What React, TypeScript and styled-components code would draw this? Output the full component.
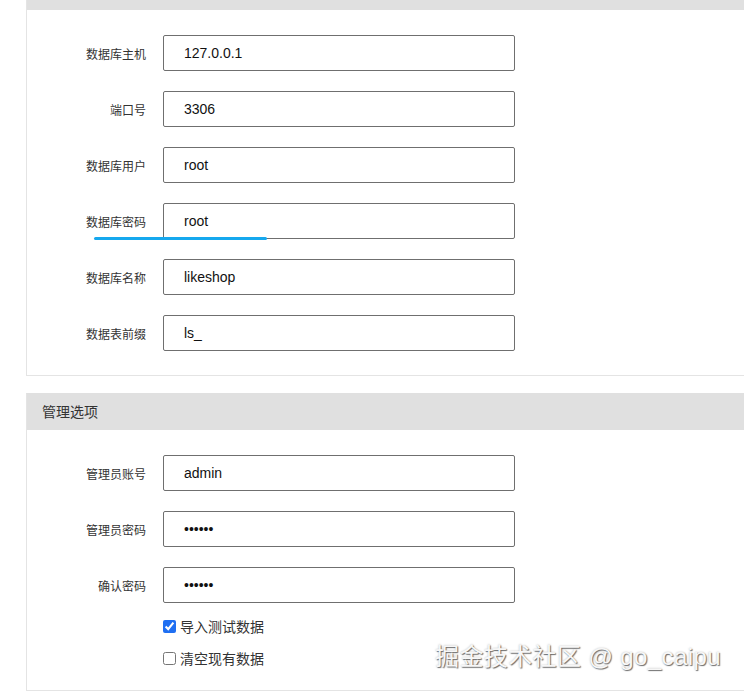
import React from "react";
import styled, { createGlobalStyle } from "styled-components";

const GlobalStyle = createGlobalStyle`
  html, body {
    margin: 0;
    padding: 0;
    background: #ffffff;
    overflow: hidden;
  }
  body {
    font-family: "Liberation Sans", "Noto Sans CJK SC", Arial, sans-serif;
    color: #333333;
  }
`;

const Page = styled.div`
  position: relative;
  width: 744px;
  height: 693px;
  overflow: hidden;
  padding-left: 26px;
  box-sizing: border-box;
`;

const Panel = styled.section<{ $offset?: number }>`
  width: 760px;
  background: #ffffff;
  border: 1px solid #e4e4e4;
  border-top-color: #e0e0e0;
  margin-top: ${(p) => (p.$offset !== undefined ? `${p.$offset}px` : "17px")};
`;

const PanelHeader = styled.div`
  height: 36px;
  line-height: 36px;
  padding: 0 15px;
  background: #e0e0e0;
  font-size: 14px;
  color: #333333;
`;

const PanelBody = styled.div<{ $bottom: number }>`
  display: flex;
  flex-direction: column;
  gap: 20px;
  padding: 25px 0 ${(p) => p.$bottom}px;
`;

const Row = styled.label`
  display: grid;
  grid-template-columns: 119px 352px;
  column-gap: 17px;
  align-items: center;
`;

const FieldLabel = styled.span`
  text-align: right;
  font-size: 12px;
  color: #333333;
`;

const TextInput = styled.input`
  box-sizing: border-box;
  width: 352px;
  height: 36px;
  margin: 0;
  padding: 0 20px;
  border: 1px solid #6f6f6f;
  border-radius: 2px;
  background: #ffffff;
  font-family: "Liberation Sans", "Noto Sans CJK SC", Arial, sans-serif;
  font-size: 14px;
  color: #111111;
  outline: none;
`;

const Options = styled.div`
  display: flex;
  flex-direction: column;
  padding-left: 136px;
  margin-top: -13px;
`;

const Option = styled.label`
  display: flex;
  align-items: center;
  height: 32px;
  font-size: 14px;
  color: #333333;
`;

const Check = styled.input`
  width: 13px;
  height: 13px;
  margin: 0 4px 0 0;
  accent-color: #1f6ff2;
`;

const Underline = styled.div`
  position: absolute;
  left: 94px;
  top: 237px;
  width: 173px;
  height: 3px;
  border-radius: 2px;
  background: #16a8ee;
`;

const Watermark = styled.div`
  position: absolute;
  left: 435px;
  top: 642px;
  font-size: 24px;
  line-height: 30px;
  letter-spacing: 0.4px;
  white-space: nowrap;
  color: #f7f7f7;
  text-shadow: 1px 1px 1px rgba(0, 0, 0, 0.55), 0 0 2px rgba(0, 0, 0, 0.25);
`;

type Field = { label: string; value: string; type?: string };

const dbFields: Field[] = [
  { label: "数据库主机", value: "127.0.0.1" },
  { label: "端口号", value: "3306" },
  { label: "数据库用户", value: "root" },
  { label: "数据库密码", value: "root" },
  { label: "数据库名称", value: "likeshop" },
  { label: "数据表前缀", value: "ls_" },
];

const adminFields: Field[] = [
  { label: "管理员账号", value: "admin" },
  { label: "管理员密码", value: "123456", type: "password" },
  { label: "确认密码", value: "123456", type: "password" },
];

const FieldRow = ({ label, value, type }: Field) => (
  <Row>
    <FieldLabel>{label}</FieldLabel>
    <TextInput type={type ?? "text"} defaultValue={value} />
  </Row>
);

export default function App() {
  return (
    <>
      <GlobalStyle />
      <Page>
        {/* database section, scrolled so only the bottom of its header shows */}
        <Panel $offset={-27}>
          <PanelHeader />
          <PanelBody $bottom={24}>
            {dbFields.map((f) => (
              <FieldRow key={f.label} {...f} />
            ))}
          </PanelBody>
        </Panel>
        <Panel>
          <PanelHeader>管理选项</PanelHeader>
          <PanelBody $bottom={16}>
            {adminFields.map((f) => (
              <FieldRow key={f.label} {...f} />
            ))}
            <Options>
              <Option>
                <Check type="checkbox" defaultChecked />
                导入测试数据
              </Option>
              <Option>
                <Check type="checkbox" />
                清空现有数据
              </Option>
            </Options>
          </PanelBody>
        </Panel>
        <Underline />
        <Watermark>掘金技术社区 @ go_caipu</Watermark>
      </Page>
    </>
  );
}
